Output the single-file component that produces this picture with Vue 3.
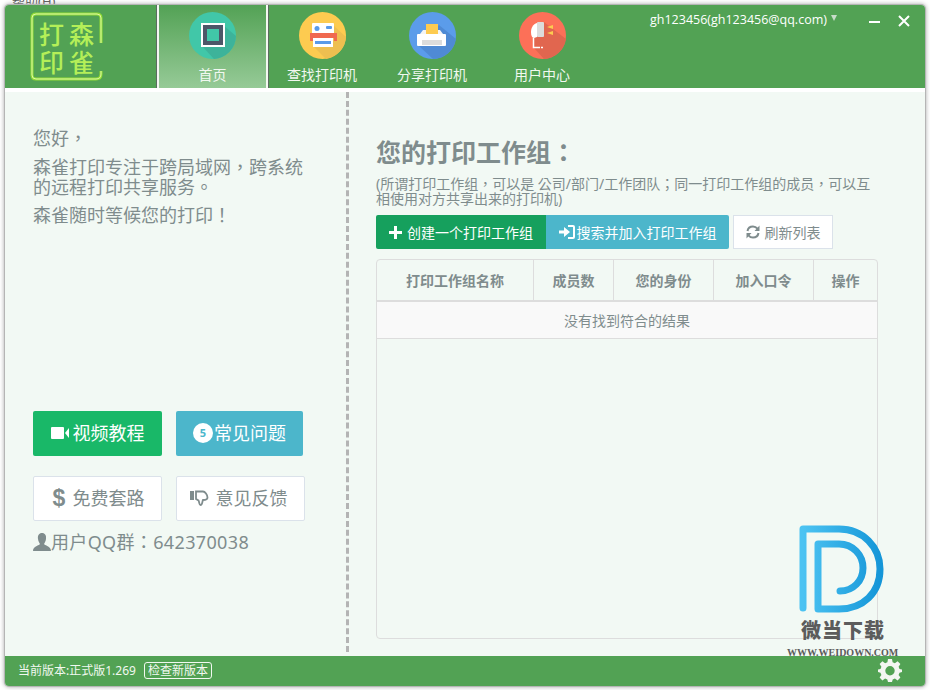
<template>
  <div class="page">
    <div class="menu-sliver">帮助(H)</div>
    <div class="window">
      <header class="topbar">
        <div class="logo">
          <div class="logo-box">
            <svg class="logo-border" width="73" height="69" viewBox="0 0 73 69">
              <path d="M71 31 V6 Q71 2 67 2 H6 Q2 2 2 6 V63 Q2 67 6 67 H66 Q71 67 71 62 V59" fill="none" stroke="#93dc34" stroke-width="3" />
              <path d="M71 31 V6 Q71 2 67 2 H6 Q2 2 2 6 V63 Q2 67 6 67 H66 Q71 67 71 62 V59" fill="none" stroke="#dcf8a8" stroke-width="1" />
            </svg>
            <span>打</span><span>森</span><span>印</span><span>雀</span>
          </div>
        </div>
        <nav class="nav">
          <div v-for="(item, i) in navItems" :key="item.label" class="nav-item" :class="{ active: i === 0 }">
            <svg class="nav-icon" viewBox="0 0 47 47" v-html="item.icon"></svg>
            <span class="nav-label">{{ item.label }}</span>
          </div>
        </nav>
        <div class="account">
          <span class="account-name">gh123456(gh123456@qq.com)</span>
          <span class="caret"></span>
        </div>
        <div class="win-controls">
          <svg width="14" height="14" viewBox="0 0 14 14"><rect x="1" y="7" width="11" height="2" fill="#fff" /></svg>
          <svg width="14" height="14" viewBox="0 0 14 14"><path d="M2 2 L12 12 M12 2 L2 12" stroke="#fff" stroke-width="2" /></svg>
        </div>
      </header>
      <div class="white-gap"></div>

      <main class="content">
        <section class="left">
          <p class="hello">您好，</p>
          <p class="intro">森雀打印专注于跨局域网，跨系统的远程打印共享服务。</p>
          <p class="wait">森雀随时等候您的打印！</p>

          <div class="btn-row first">
            <div class="big-btn green">
              <svg width="18" height="12" viewBox="0 0 18 12"><rect x="0" y="0" width="13" height="12" rx="1" fill="#fff" /><path d="M14 6 L18 1 V11 Z" fill="#fff" /></svg>
              <span>视频教程</span>
            </div>
            <div class="big-btn teal">
              <span class="badge">5</span><span>常见问题</span>
            </div>
          </div>
          <div class="btn-row second">
            <div class="big-btn plain money">
              <span class="dollar">$</span>
              <span>免费套路</span>
            </div>
            <div class="big-btn plain wide">
              <svg width="19" height="18" viewBox="0 0 19 18"><rect x="0" y="2" width="4" height="9" fill="#7f8c8d" /><path d="M6 2.500 H13 C15 2.500 17.500 6 17.500 8.500 C17.500 10.500 15.500 11 13 11 C12 13 12.500 16 10.500 16 C9 16 9.500 13 8.500 11.500 L6 10 Z" fill="none" stroke="#7f8c8d" stroke-width="1.800" /></svg>
              <span>意见反馈</span>
            </div>
          </div>
          <div class="qq">
            <svg width="18" height="18" viewBox="0 0 18 18"><path d="M9 0 C12 0 13.500 2.500 13 6 C12.700 8.500 11.500 10 11 11 C11.500 12.500 18 13 18 18 H0 C0 13 6.500 12.500 7 11 C6.500 10 5.300 8.500 5 6 C4.500 2.500 6 0 9 0 Z" fill="#7f8c8d" /></svg>
            <span class="qq-text">用户QQ群：642370038</span>
          </div>
        </section>

        <section class="right">
          <h2 class="title">您的打印工作组：</h2>
          <p class="desc">(所谓打印工作组，可以是 公司/部门/工作团队；同一打印工作组的成员，可以互相使用对方共享出来的打印机)</p>
          <div class="toolbar">
            <div class="tool create">
              <svg width="13" height="13" viewBox="0 0 13 13"><path d="M5 0 H8 V5 H13 V8 H8 V13 H5 V8 H0 V5 H5 Z" fill="#fff" /></svg>
              <span>创建一个打印工作组</span>
            </div>
            <div class="tool search">
              <svg width="16" height="14" viewBox="0 0 16 14"><path d="M0 5.500 H5 V2 L11 7 L5 12 V8.500 H0 Z" fill="#fff" /><path d="M9 1 H14 C15 1 15 2 15 2 V12 C15 13 14 13 14 13 H9" fill="none" stroke="#fff" stroke-width="2" /></svg>
              <span>搜索并加入打印工作组</span>
            </div>
            <div class="tool refresh">
              <svg width="14" height="14" viewBox="0 0 14 14"><path d="M1.500 6 C2 3 4.500 1.500 7 1.500 C9 1.500 10.500 2.500 11.500 3.700 M12.500 8 C12 11 9.500 12.500 7 12.500 C5 12.500 3.500 11.500 2.500 10.300" fill="none" stroke="#7f8c8d" stroke-width="2" /><path d="M13.500 0.500 V6 H8.500 Z M0.500 13.500 V8 H5.500 Z" fill="#7f8c8d" /></svg>
              <span>刷新列表</span>
            </div>
          </div>
          <div class="table">
            <div class="thead">
              <div v-for="col in columns" :key="col.name" class="th" :style="{ width: col.width + 'px' }">{{ col.name }}</div>
            </div>
            <div class="empty-row">没有找到符合的结果</div>
          </div>
        </section>
      </main>

      <footer class="statusbar">
        <span class="version">当前版本:正式版1.269</span>
        <span class="check">检查新版本</span>
        <svg class="gear" width="24" height="24" viewBox="0 0 24 24">
          <path d="M10 1 H14 L14.600 4.200 L16.900 5.200 L19.600 3.300 L22.400 6.100 L20.600 8.800 L21.500 11 L24 11.500 V14 L21.500 14.700 L20.600 17 L22.400 19.600 L19.600 22.400 L16.900 20.600 L14.700 21.500 L14 24 H10 L9.300 21.500 L7.100 20.600 L4.400 22.400 L1.600 19.600 L3.400 17 L2.500 14.700 L0 14 V11.500 L2.500 11 L3.400 8.800 L1.600 6.100 L4.400 3.300 L7.100 5.200 L9.400 4.200 Z M12 8 A4.700 4.700 0 1 0 12 17.400 A4.700 4.700 0 1 0 12 8 Z" fill="#f3f6f2" fill-rule="evenodd" />
        </svg>
      </footer>

      <div class="watermark">
        <svg width="90" height="92" viewBox="0 0 90 92">
          <defs>
            <linearGradient id="wd" x1="0" y1="0" x2="1" y2="0">
              <stop offset="0" stop-color="#4cc3f2" />
              <stop offset="1" stop-color="#1596d8" />
            </linearGradient>
          </defs>
          <path d="M6 83 V4 H42 C66 4 83 22 83 44 C83 68 66 84 42 84 H21 V19 H42 C56 19 66 30 66 43 C66 56 56 66 43 66" fill="none" stroke="url(#wd)" stroke-width="7" stroke-linecap="round" stroke-linejoin="round" />
        </svg>
        <div class="wm-cn">微当下载</div>
        <div class="wm-en">WWW.WEIDOWN.COM</div>
      </div>
    </div>
  </div>
</template>

<script setup>
const navItems = [
  {
    label: '首页',
    icon: '<circle cx="23.500" cy="23.500" r="23.500" fill="#41c7a8"/><path d="M13 34 L34 13 L47 24 A23.500 23.500 0 0 1 25 47 Z" fill="#3db39a"/><rect x="12" y="11" width="24" height="24" fill="#fff"/><rect x="14" y="13" width="20" height="20" fill="#4d5768"/><rect x="18" y="17" width="12" height="12" fill="#41c7a8"/>',
  },
  {
    label: '查找打印机',
    icon: '<circle cx="23.500" cy="23.500" r="23.500" fill="#fdcb50"/><path d="M14 34 L34 13 L47 25 A23.500 23.500 0 0 1 27 47 Z" fill="#eebf50"/><rect x="13" y="11" width="22" height="11" rx="1" fill="#fff"/><circle cx="18" cy="16.500" r="2.500" fill="#5a9ae8"/><rect x="27" y="14" width="6" height="3" rx="1" fill="#5a9ae8"/><path d="M11 21 H38 V29 H35 V26 H14 V29 H11 Z" fill="#f0694f"/><rect x="14" y="26" width="20" height="9" fill="#fff"/><rect x="16" y="29" width="16" height="3" fill="#5a9ae8"/>',
  },
  {
    label: '分享打印机',
    icon: '<circle cx="23.500" cy="23.500" r="23.500" fill="#5b9cea"/><path d="M10 34 L30 13 L47 27 A23.500 23.500 0 0 1 24 47 Z" fill="#4f8ad4"/><rect x="17" y="12" width="12" height="10" fill="#fdcb50"/><path d="M14 18 H17 V22 H29 V18 H31 L34 22 H11 Z" fill="#f4f4f4"/><rect x="8" y="22" width="29" height="12" rx="1" fill="#fff"/><rect x="13" y="28" width="20" height="5" fill="#dcdcdc"/>',
  },
  {
    label: '用户中心',
    icon: '<circle cx="23.500" cy="23.500" r="23.500" fill="#fc7058"/><path d="M25 10 L47 27 A23.500 23.500 0 0 1 25 47 L15 36 L14 26 Z" fill="#e1664f"/><path d="M18 11 C14 12 12 16 12 20 C12 23 13 26 15 26 L18 25 Z" fill="#fff"/><rect x="18" y="10" width="7" height="15" rx="1" fill="#dcdcdc"/><path d="M14.500 26 V35.500 H24" fill="none" stroke="#fff" stroke-width="1.500" stroke-dasharray="16 1 2 1 2"/><path d="M34 13 V17 L28 15 Z M34 19 V23 L28 21 Z" fill="#fdcb50"/>',
  },
]

const columns = [
  { name: '打印工作组名称', width: 157 },
  { name: '成员数', width: 80 },
  { name: '您的身份', width: 100 },
  { name: '加入口令', width: 100 },
  { name: '操作', width: 63 },
]
</script>

<style>
html, body {
  margin: 0;
  background: #fff;
}
</style>

<style scoped>
.page {
  position: relative;
  width: 930px;
  height: 690px;
  overflow: hidden;
  background: #fff;
  font-family: "Noto Sans", "Noto Sans CJK SC", sans-serif;
}
p, h2 {
  margin: 0;
}
/* TC face: its full-width punctuation sits centred, like the reference */
.hello, .intro, .wait, .qq-text, .title, .desc {
  font-family: "Noto Sans", "Noto Sans CJK TC", sans-serif;
}
.menu-sliver {
  position: absolute;
  left: 12px;
  top: -9px;
  font-size: 13px;
  color: #555;
}
.window {
  position: absolute;
  left: 5px;
  top: 5px;
  width: 920px;
  height: 681px;
  display: flex;
  flex-direction: column;
  background: #f2f9f4;
  border-radius: 4px;
  overflow: hidden;
  box-shadow: 0 0 0 1px #b5b5b5, 0 0 4px 1px #aaa;
}
.topbar {
  display: flex;
  height: 83px;
  flex-shrink: 0;
  background: #52a254;
  color: #fff;
}
.logo {
  width: 152px;
  padding: 7px 0 0 25px;
  box-sizing: border-box;
}
.logo-box {
  position: relative;
  width: 73px;
  height: 69px;
  box-sizing: border-box;
  padding: 7px 0 0 9px;
  display: grid;
  grid-template-columns: 30px 30px;
  grid-template-rows: 28px 28px;
  align-items: center;
  justify-items: start;
  font-family: "Noto Sans CJK SC", sans-serif;
  font-size: 25px;
  line-height: 28px;
  font-weight: 500;
  color: #b4ef58;
}
.logo-border {
  position: absolute;
  left: 0;
  top: 0;
}
.nav {
  display: flex;
  width: 440px;
  flex-shrink: 0;
}
.nav-item {
  width: 110px;
  display: flex;
  flex-direction: column;
  align-items: center;
  padding-top: 7px;
  box-sizing: border-box;
  font-size: 14px;
}
.nav-item.active {
  width: 111px;
  margin-right: -1px;
  border-left: 2px solid #f3f8f1;
  border-right: 2px solid #f3f8f1;
  box-shadow: -1px 0 0 #5c6b60, 1px 0 0 #5c6b60;
  background: linear-gradient(#53a255, #96ca97);
}
.nav-icon {
  width: 47px;
  height: 47px;
  flex-shrink: 0;
}
.nav-label {
  margin-top: 5px;
  line-height: 22px;
  white-space: nowrap;
  color: #f1f8f0;
}
.account {
  flex: 1;
  padding: 6px 0 0 53px;
  display: flex;
  align-items: flex-start;
  gap: 4px;
  font-family: "Open Sans", sans-serif;
  font-size: 12.500px;
  line-height: 18px;
}
.caret {
  margin-top: 4px;
  border-left: 3.500px solid transparent;
  border-right: 3.500px solid transparent;
  border-top: 6px solid #c7dcc8;
}
.win-controls {
  width: 70px;
  padding: 9px 14px 0 0;
  box-sizing: border-box;
  display: flex;
  justify-content: flex-end;
  gap: 15px;
  align-items: flex-start;
  flex-shrink: 0;
}
.white-gap {
  height: 4px;
  background: #fff;
  flex-shrink: 0;
}
.content {
  flex: 1;
  display: flex;
  min-height: 0;
}
.left {
  width: 344px;
  box-sizing: border-box;
  padding: 36px 0 0 28px;
  border-right: 3px dashed #b4b4b4;
  color: #7f8c8d;
  font-size: 18px;
  line-height: 20px;
  flex-shrink: 0;
  margin-bottom: 4px;
}
.intro {
  margin-top: 9px;
  width: 275px;
}
.wait {
  margin-top: 8px;
}
.btn-row {
  display: flex;
  gap: 14px;
}
.btn-row.first {
  margin-top: 186px;
}
.btn-row.second {
  margin-top: 20px;
}
.big-btn {
  width: 129px;
  height: 45px;
  box-sizing: border-box;
  padding-bottom: 2px;
  border-radius: 2px;
  display: flex;
  align-items: center;
  justify-content: center;
  gap: 4px;
  color: #fff;
}
.big-btn.green {
  background: #19b868;
}
.big-btn.teal {
  width: 127px;
  background: #4cb6cb;
}
.big-btn.plain {
  background: #fff;
  border: 1px solid #dbe2ea;
  color: #7f8c8d;
  gap: 7px;
}
.big-btn.money {
  padding-left: 2px;
}
.big-btn.wide {
  padding-right: 4px;
}
.dollar {
  font-family: "Liberation Sans", sans-serif;
  font-weight: 700;
  font-size: 23px;
}
.badge {
  width: 20px;
  height: 20px;
  border-radius: 50%;
  background: #fff;
  color: #4cb6cb;
  font-size: 11px;
  font-weight: 700;
  line-height: 20px;
  text-align: center;
  margin-right: -3px;
}
.qq {
  margin-top: 9px;
  display: flex;
  align-items: center;
  height: 23px;
}
.qq-text {
  letter-spacing: 0.350px;
}
.right {
  flex: 1;
  padding: 44px 0 0 27px;
  position: relative;
  display: flex;
  flex-direction: column;
  min-width: 0;
  color: #7f8c8d;
}
.title {
  font-size: 25px;
  line-height: 32px;
  font-weight: 700;
}
.desc {
  margin-top: 8px;
  width: 500px;
  font-size: 14px;
  line-height: 15px;
}
.toolbar {
  display: flex;
  margin-top: 9px;
  height: 34px;
  font-size: 14px;
}
.tool {
  display: flex;
  align-items: center;
  justify-content: center;
  gap: 5px;
  box-sizing: border-box;
  height: 34px;
  color: #fff;
}
.create {
  width: 170px;
  background: #16a05d;
  border-radius: 2px 0 0 2px;
}
.search {
  width: 183px;
  background: #4cb6cb;
  border-radius: 0 2px 2px 0;
  gap: 2px;
}
.refresh {
  width: 100px;
  margin-left: 4px;
  background: #fff;
  border: 1px solid #dbe2ea;
  color: #7f8c8d;
}
.table {
  margin-top: 10px;
  width: 502px;
  height: 380px;
  box-sizing: border-box;
  border: 1px solid #dddddd;
  border-radius: 4px;
  font-size: 14px;
}
.thead {
  display: flex;
  height: 42px;
  box-sizing: border-box;
  border-bottom: 2px solid #ddd;
  font-weight: 700;
}
.th {
  display: flex;
  align-items: center;
  justify-content: center;
  box-sizing: border-box;
  border-right: 1px solid #ddd;
}
.th:last-child {
  border-right: 0;
}
.empty-row {
  height: 37px;
  box-sizing: border-box;
  display: flex;
  align-items: center;
  justify-content: center;
  background: #f9f9f9;
  border-bottom: 1px solid #ddd;
}
.statusbar {
  height: 30px;
  flex-shrink: 0;
  background: #52a254;
  color: #f1f8f0;
  display: flex;
  align-items: center;
  padding: 0 0 2px 13px;
  box-sizing: border-box;
  font-size: 12px;
}
.check {
  margin-left: 8px;
  padding: 0 3px;
  height: 17px;
  line-height: 16px;
  box-sizing: border-box;
  border: 1px solid #f1f8f0;
  border-radius: 3px;
}
.gear {
  margin-left: auto;
  margin-right: 23px;
}
.watermark {
  position: absolute;
  left: 790px;
  top: 520px;
  width: 100px;
  display: flex;
  flex-direction: column;
  align-items: flex-start;
}
.watermark svg {
  margin-left: 2px;
  margin-bottom: 1px;
}
.wm-cn {
  margin-left: 6px;
  font-family: "Noto Sans CJK SC", sans-serif;
  font-size: 20px;
  line-height: 24px;
  font-weight: 900;
  color: #5c5c5c;
  letter-spacing: 1px;
  white-space: nowrap;
}
.wm-en {
  margin: 5px 0 0 -8px;
  font-family: "Liberation Serif", serif;
  font-size: 10px;
  line-height: 12px;
  font-weight: 700;
  color: #5c5c5c;
  white-space: nowrap;
}
</style>
